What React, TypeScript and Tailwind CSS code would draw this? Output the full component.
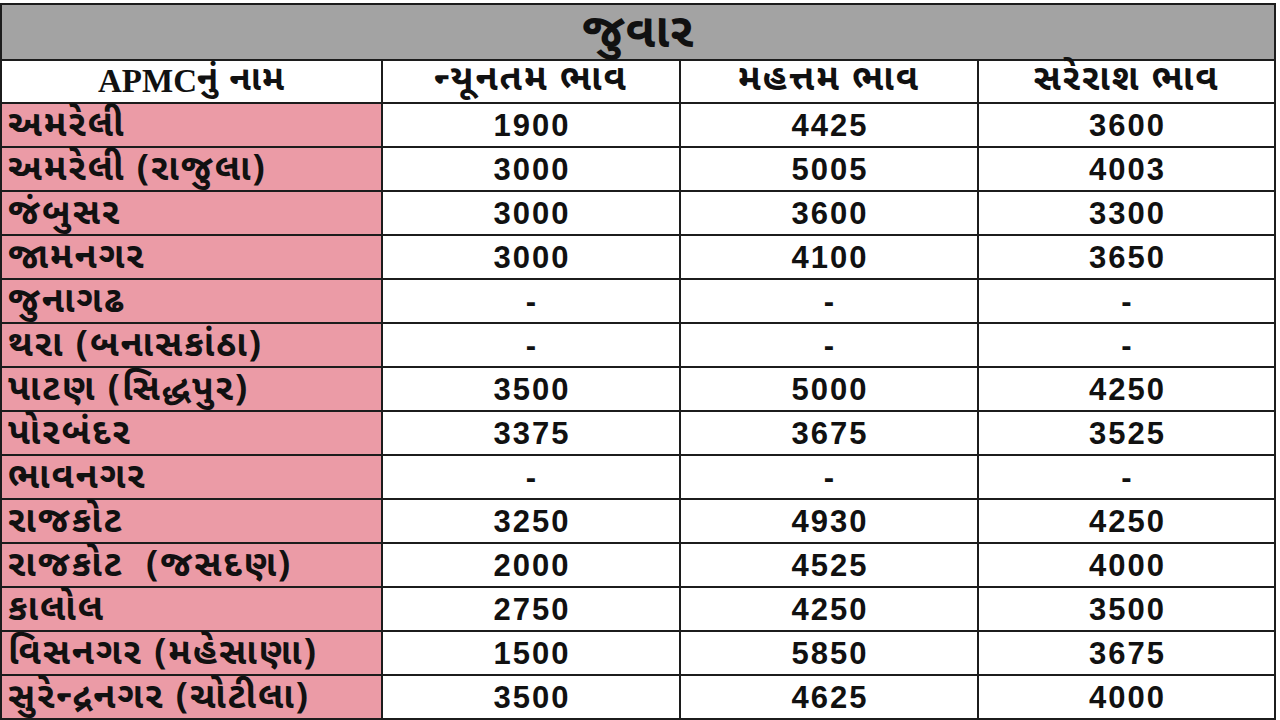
import React from "react";

const rows: [string, string, string, string][] = [
  ["અમરેલી", "1900", "4425", "3600"],
  ["અમરેલી (રાજુલા)", "3000", "5005", "4003"],
  ["જંબુસર", "3000", "3600", "3300"],
  ["જામનગર", "3000", "4100", "3650"],
  ["જુનાગઢ", "-", "-", "-"],
  ["થરા (બનાસકાંઠા)", "-", "-", "-"],
  ["પાટણ (સિદ્ધપુર)", "3500", "5000", "4250"],
  ["પોરબંદર", "3375", "3675", "3525"],
  ["ભાવનગર", "-", "-", "-"],
  ["રાજકોટ", "3250", "4930", "4250"],
  ["રાજકોટ  (જસદણ)", "2000", "4525", "4000"],
  ["કાલોલ", "2750", "4250", "3500"],
  ["વિસનગર (મહેસાણા)", "1500", "5850", "3675"],
  ["સુરેન્દ્રનગર (ચોટીલા)", "3500", "4625", "4000"],
];

const headers = ["ન્યૂનતમ ભાવ", "મહત્તમ ભાવ", "સરેરાશ ભાવ"];

export default function App() {
  return (
    <div className="w-[1280px] h-[720px] bg-white overflow-hidden pt-[3px]">
      <div className="w-[1276px] grid grid-cols-[379px_296px_296px_295px] gap-[2px] p-[2px] bg-[#1c1c1c] text-[#111] font-bold">
        <div className="col-span-4 h-[54px] bg-[#a3a3a3] flex items-center justify-center pt-[7px] text-[48px] leading-none tracking-[1px] font-['Noto_Sans_Gujarati','Lohit_Gujarati','Noto_Sans',sans-serif]">
          જુવાર
        </div>
        <div className="h-[41px] bg-white flex items-center justify-center leading-none">
          <span className="text-[33px] font-['Liberation_Serif',serif]">APMC</span>
          <span className="text-[35px] tracking-[1px] font-['Noto_Sans_Gujarati','Lohit_Gujarati','Noto_Sans',sans-serif]">
            નું નામ
          </span>
        </div>
        {headers.map((h) => (
          <div
            key={h}
            className="h-[41px] bg-white flex items-center justify-center text-[36px] leading-none tracking-[2px] font-['Noto_Sans_Gujarati','Lohit_Gujarati','Noto_Sans',sans-serif]"
          >
            {h}
          </div>
        ))}
        {rows.map((r, i) => (
          <React.Fragment key={i}>
            <div className="h-[42px] bg-[#eb9ba6] flex items-center pl-[6px] pt-[6px] text-[36px] leading-none tracking-[2px] whitespace-pre font-['Noto_Sans_Gujarati','Lohit_Gujarati','Noto_Sans',sans-serif]">
              {r[0]}
            </div>
            {r.slice(1).map((v, j) => (
              <div
                key={j}
                className="h-[42px] bg-white flex items-center justify-center pl-[2px] text-[31px] leading-none tracking-[2px] font-['Liberation_Sans',Arial,sans-serif]"
              >
                {v}
              </div>
            ))}
          </React.Fragment>
        ))}
      </div>
    </div>
  );
}
